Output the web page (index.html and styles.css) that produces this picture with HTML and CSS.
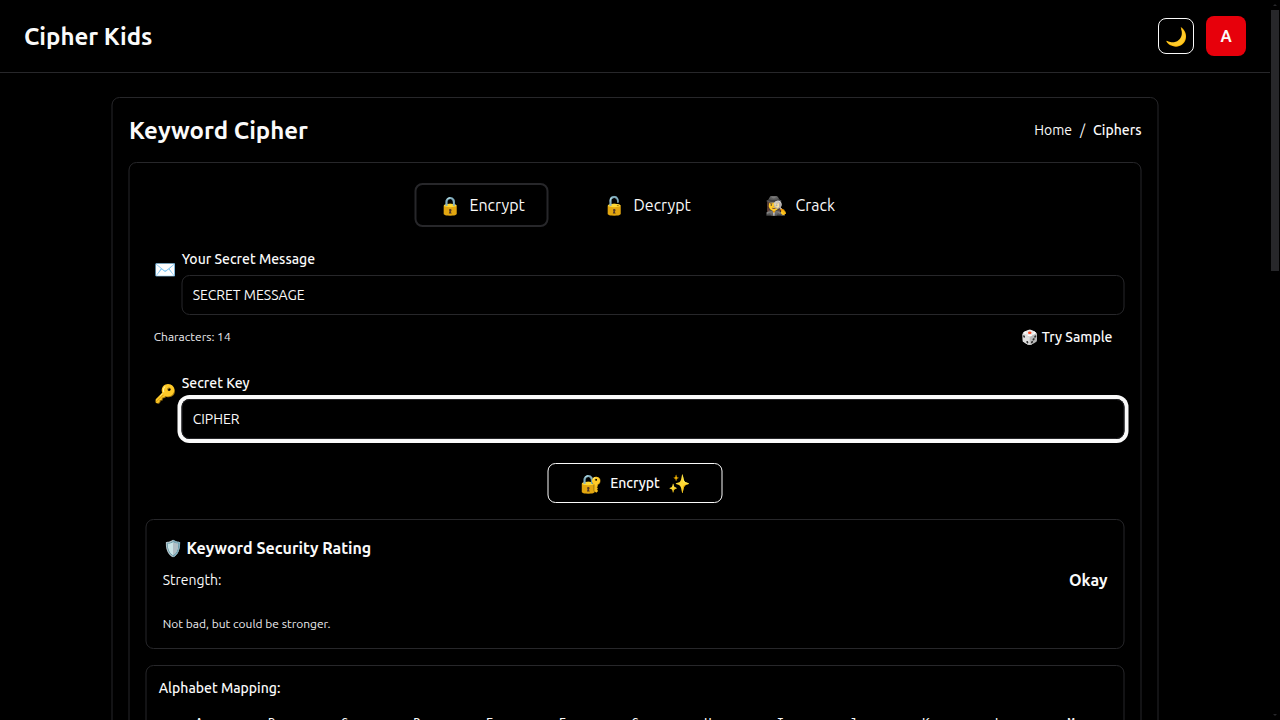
FILE: index.html
```html
<!DOCTYPE html>
<html lang="en">
<head>
<meta charset="utf-8">
<title>Cipher Kids</title>
<link rel="stylesheet" href="styles.css">
</head>
<body>
<div class="app">
  <header class="topbar">
    <div class="brand">Cipher Kids</div>
    <div class="actions">
      <button class="theme">🌙</button>
      <div class="avatar">A</div>
    </div>
  </header>
  <main class="card">
    <div class="card-head">
      <h1>Keyword Cipher</h1>
      <nav class="crumbs"><span>Home</span><span>/</span><b>Ciphers</b></nav>
    </div>
    <section class="panel">
      <div class="tabs">
        <div class="tab active"><span class="emoji">🔒</span><span>Encrypt</span></div>
        <div class="tab decrypt"><span class="emoji">🔓</span><span>Decrypt</span></div>
        <div class="tab"><span class="emoji">🕵️‍♀️</span><span>Crack</span></div>
      </div>
      <div class="field">
        <span class="emoji">✉️</span>
        <div class="control"><label>Your Secret Message</label><div class="input">SECRET MESSAGE</div></div>
      </div>
      <div class="meta"><span>Characters: 14</span><span class="sample"><span>🎲</span><span>Try Sample</span></span></div>
      <div class="field">
        <span class="emoji">🔑</span>
        <div class="control"><label>Secret Key</label><div class="input focus">CIPHER</div></div>
      </div>
      <button class="submit"><span class="emoji">🔐</span><span>Encrypt</span><span class="emoji">✨</span></button>
      <div class="box rating">
        <h2><span>🛡️</span><span>Keyword Security Rating</span></h2>
        <div class="row"><span>Strength:</span><b>Okay</b></div>
        <p>Not bad, but could be stronger.</p>
      </div>
      <div class="box mapping">
        <div class="map-title">Alphabet Mapping:</div>
        <div class="letters"><span>A</span><span>B</span><span>C</span><span>D</span><span>E</span><span>F</span><span>G</span><span>H</span><span>I</span><span>J</span><span>K</span><span>L</span><span>M</span></div>
      </div>
    </section>
  </main>
</div>
<div class="scrollbar"><i class="up"></i><div class="thumb"></div><i class="down"></i></div>
</body>
</html>
```
FILE: styles.css
```css
* { box-sizing: border-box; }
body { margin: 0; width: 1280px; height: 720px; overflow: hidden; display: flex; background: #000; color: #fafafa; font: 14px/20px Ubuntu, "Noto Sans", sans-serif; }
h1, h2, p { margin: 0; }
button { background: #000; color: inherit; font: inherit; padding: 0; }
.app { width: 1270px; height: 720px; overflow: hidden; }
.topbar { height: 73px; border-bottom: 1px solid #27272a; display: flex; align-items: center; justify-content: space-between; padding: 0 24px; }
.brand { font-size: 24px; font-weight: 600; line-height: 32px; padding-top: 2px; }
.actions { display: flex; align-items: center; gap: 12px; }
.theme { width: 36px; height: 36px; border: 1px solid #fafafa; border-radius: 8px; font-size: 18px; display: flex; align-items: center; justify-content: center; }
.avatar { width: 40px; height: 40px; border-radius: 8px; background: #e7000b; font-size: 16px; font-weight: 700; display: flex; align-items: center; justify-content: center; }
.card { width: 1047px; height: 900px; margin: 24px 0 0 111px; transform: translateX(.5px); border: 1px solid #27272a; border-radius: 8px; padding: 16px; }
.card-head { display: flex; justify-content: space-between; align-items: center; height: 32px; margin-bottom: 16px; }
h1 { font-size: 24px; font-weight: 600; line-height: 32px; padding: 2px 0 0 .4px; }
.crumbs { display: flex; gap: 8px; }
.crumbs b { font-weight: 500; }
.panel { border: 1px solid #27272a; border-radius: 8px; height: 840px; padding: 20px 16px 0; }
.tabs { display: flex; height: 44px; margin-left: 269px; gap: 29px; font-size: 16px; }
.tab { width: 134px; border: 2px solid transparent; border-radius: 8px; display: flex; align-items: center; padding-left: 22px; gap: 9px; }
.tab.active { border-color: #27272a; }
.tab.decrypt { padding-left: 23px; }
.emoji { font-size: 18px; width: 22px; }
.field { display: flex; margin-top: 22px; align-items: flex-start; gap: 6px; padding-left: 8px; }
.field .emoji { padding-top: 10px; }
.control { flex: 1; }
label { display: block; font-weight: 500; height: 26px; padding-left: .2px; }
.input { height: 40px; border: 1px solid #27272a; border-radius: 8px; padding: 9px 10.2px; }
.input.focus { box-shadow: 0 0 0 4px #fafafa; }
.meta { display: flex; justify-content: space-between; align-items: center; height: 20px; margin: 12px 12px 14px 8.2px; font-size: 12px; color: #ececef; }
.sample { font-size: 14px; font-weight: 500; color: #fafafa; display: flex; gap: 4px; }
.meta + .field { margin-top: 26px; }
.submit { display: flex; align-items: center; justify-content: center; gap: 8px; width: 175px; height: 40px; border: 1px solid #fafafa; border-radius: 8px; margin: 24px auto 16px; font-weight: 500; }
.box { border: 1px solid #27272a; border-radius: 8px; }
.rating { height: 130px; padding: 16px 16px 16px 16.2px; margin-bottom: 16px; }
h2 { font-size: 16px; font-weight: 600; line-height: 24px; height: 32px; display: flex; gap: 3.8px; }
.row { display: flex; justify-content: space-between; line-height: 24px; }
.row b { font-size: 16px; font-weight: 700; }
.rating p { font-size: 12px; margin-top: 24px; line-height: 16px; color: #ececef; }
.mapping { height: 180px; padding: 12px 12px 12px 12.2px; }
.map-title { font-weight: 500; }
.letters { display: grid; grid-template-columns: repeat(13, 1fr); margin-top: 17px; padding: 0 4px 0 4px; font: 12px/16px "DejaVu Sans Mono", monospace; text-align: center; }
.scrollbar { width: 10px; height: 720px; display: flex; flex-direction: column; align-items: center; }
.thumb { width: 8px; height: 261px; background: #27272a; }
.up, .down { border: 2px solid transparent; }
.up { border-bottom-color: #27272a; margin: 2px 0 4px; }
.down { border-top-color: #27272a; margin: auto 0 2px; }
```
